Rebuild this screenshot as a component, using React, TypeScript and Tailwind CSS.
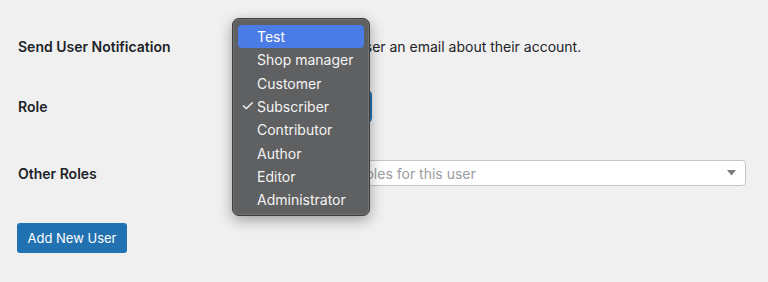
import React from "react";

const items = [
  "Test",
  "Shop manager",
  "Customer",
  "Subscriber",
  "Contributor",
  "Author",
  "Editor",
  "Administrator",
];

export default function App() {
  return (
    <div
      className="relative w-[768px] h-[282px] bg-[#f0f0f1] text-[#1d2327] overflow-hidden"
      style={{ fontFamily: "Inter, 'Liberation Sans', sans-serif" }}
    >
      <div className="flex flex-col pl-[18px] pt-[28px]">
        {/* Row 1 */}
        <div className="flex items-center h-[36px]">
          <div className="w-[220px] text-[14px] font-semibold">Send User Notification</div>
          <div className="flex items-center gap-[8px]">
            <div className="w-[16px] h-[16px] rounded-[4px] border border-[#8c8f94] bg-white" />
            <span className="text-[14px]">Send the new user an email about their account.</span>
          </div>
        </div>
        {/* Row 2 */}
        <div className="flex items-center h-[36px] mt-[24px]">
          <div className="w-[220px] text-[14px] font-semibold">Role</div>
          <div className="w-[133px] h-[31px] rounded-[4px] border border-[#2271b1] shadow-[0_0_0_1px_#2271b1] bg-white flex items-center px-2 text-[14px]">
            Subscriber
          </div>
        </div>
        {/* Row 3 */}
        <div className="flex items-center h-[36px] mt-[31px]">
          <div className="w-[220px] text-[14px] font-semibold">Other Roles</div>
          <div className="w-[508px] h-[26px] rounded-[4px] border border-[#c3c4c7] bg-white flex items-center justify-between pl-[8px] pr-[8px]">
            <span className="text-[14px] text-[#9a9ca0]">Select additional roles for this user</span>
            <svg width="9" height="6" viewBox="0 0 9 6" className="mr-[1px]">
              <path d="M0 0 L9 0 L4.5 5.5 Z" fill="#7a7c80" />
            </svg>
          </div>
        </div>
        {/* Button */}
        <div className="mt-[32px]">
          <button className="h-[30px] w-[110px] -ml-[1px] rounded-[3px] bg-[#2271b1] text-white text-[13px] leading-none">
            Add New User
          </button>
        </div>
      </div>

      {/* Dropdown menu overlay */}
      <div className="absolute left-[232px] top-[18px] w-[138px] h-[198px] rounded-[7px] bg-[#5f6061] border border-[#3d3d3d] shadow-[0_4px_14px_rgba(0,0,0,0.35),inset_0_0_0_1px_rgba(255,255,255,0.12)] px-[5px] pt-[6px]">
        {items.map((it, i) => (
          <div
            key={it}
            className={
              i === 0
                ? "relative h-[23.3px] flex items-center pl-[19px] rounded-[4px] bg-[#4b7be5] text-white text-[14px]"
                : "relative h-[23.3px] flex items-center pl-[19px] text-[#f4f4f4] text-[14px]"
            }
          >
            {it === "Subscriber" && (
              <span className="absolute left-[3px] top-0 h-full flex items-center text-[15px]">✓</span>
            )}
            {it}
          </div>
        ))}
      </div>
    </div>
  );
}
